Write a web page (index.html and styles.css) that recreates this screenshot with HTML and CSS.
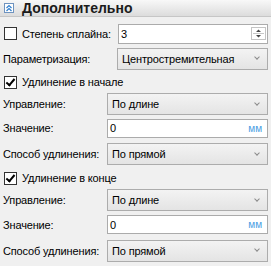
FILE: index.html
```html
<!DOCTYPE html>
<html lang="ru">
<head>
  <meta charset="UTF-8">
  <title>Дополнительно</title>
  <link rel="stylesheet" href="styles.css">
</head>
<body>
  <div class="panel">
    <div class="panel-head">
      <span class="collapse-icon">
        <svg width="8" height="8" viewBox="0 0 8 8"><path d="M1.5 4 L4 1.5 L6.5 4 M1.5 7 L4 4.5 L6.5 7" fill="none" stroke="#2f7fd0" stroke-width="1.2"/></svg>
      </span>
      <span class="panel-title">Дополнительно</span>
    </div>

    <div class="panel-body">
      <!-- spline -->
      <div class="row">
        <label class="label wide check"><span class="box"></span>Степень сплайна:</label>
        <div class="field input">
          <span>3</span>
          <span class="spin">
            <svg width="13" height="11" viewBox="0 0 13 11"><path d="M4 4 L6.5 1.5 L9 4 Z M4 7 L9 7 L6.5 9.5 Z" fill="#444"/><line x1="1" y1="5.5" x2="12" y2="5.5" stroke="#c8c8c8"/></svg>
          </span>
        </div>
      </div>
      <div class="row">
        <span class="label wide">Параметризация:</span>
        <div class="field combo"><span>Центростремительная</span><span class="arrow"></span></div>
      </div>

      <!-- start -->
      <div class="row check-row">
        <label class="check"><span class="box checked"></span>Удлинение в начале</label>
      </div>
      <div class="row r-first">
        <span class="label">Управление:</span>
        <div class="field combo"><span>По длине</span><span class="arrow"></span></div>
      </div>
      <div class="row r-tall">
        <span class="label">Значение:</span>
        <div class="field input value"><span>0</span><span class="unit">мм</span></div>
      </div>
      <div class="row r-tall">
        <span class="label">Способ удлинения:</span>
        <div class="field combo"><span>По прямой</span><span class="arrow"></span></div>
      </div>

      <!-- end -->
      <div class="row check-row">
        <label class="check"><span class="box checked"></span>Удлинение в конце</label>
      </div>
      <div class="row r-first">
        <span class="label">Управление:</span>
        <div class="field combo"><span>По длине</span><span class="arrow"></span></div>
      </div>
      <div class="row r-tall2">
        <span class="label">Значение:</span>
        <div class="field input value"><span>0</span><span class="unit">мм</span></div>
      </div>
      <div class="row">
        <span class="label">Способ удлинения:</span>
        <div class="field combo"><span>По прямой</span><span class="arrow"></span></div>
      </div>
    </div>
  </div>
</body>
</html>
```

FILE: styles.css
```css
body { margin: 0; background: #f0f0f0; font: 11px "Liberation Sans", Arial, sans-serif; letter-spacing: -0.15px; color: #000; width: 271px; height: 266px; overflow: hidden; white-space: nowrap; }

.panel-head { height: 16px; border-bottom: 1px solid #c6c6c6; background: linear-gradient(#f8f8f8, #dcdcdc); display: flex; align-items: center; padding-left: 4px; }
.collapse-icon { width: 8px; height: 8px; border: 1px solid #6f93bf; background: #fff; margin-right: 8px; display: flex; }
.panel-title { font-weight: bold; font-size: 14px; letter-spacing: 0; color: #1b1b1b; }

.panel-body { padding: 4px 3px 0 3px; }
.row { display: flex; align-items: center; height: 25px; }
.check-row { height: 22px; }
.r-first { height: 22px; }
.r-tall { height: 26px; }
.r-tall2 { height: 27px; }

.label { width: 104px; flex: none; }
.label.wide { width: 114px; }
.check { display: flex; align-items: center; padding-left: 1px; }
.check .box { width: 11px; height: 11px; border: 1px solid #333; background: #fff; margin-right: 5px; position: relative; }
.box.checked::after { content: ""; position: absolute; left: 3px; top: 0px; width: 3px; height: 7px; border: solid #000; border-width: 0 2px 2px 0; transform: rotate(40deg); }

.field { flex: 1; box-sizing: border-box; display: flex; align-items: center; justify-content: space-between; }
.input { height: 20px; background: #fff; border: 1px solid #ababab; padding: 0 1px 0 2px; }
.value { height: 19px; }
.combo { height: 22px; border: 1px solid #acacac; background: linear-gradient(#f3f3f3, #e4e4e4); padding: 0 8px 0 4px; }

.spin { width: 13px; height: 11px; border: 1px solid #c4c4c4; display: flex; }
.arrow { width: 3px; height: 3px; border: solid #8a8a8a; border-width: 0 1px 1px 0; transform: rotate(45deg); margin-top: -3px; }
.unit { color: #4a9de3; font-size: 10px; letter-spacing: 0; padding-right: 4px; }
```
